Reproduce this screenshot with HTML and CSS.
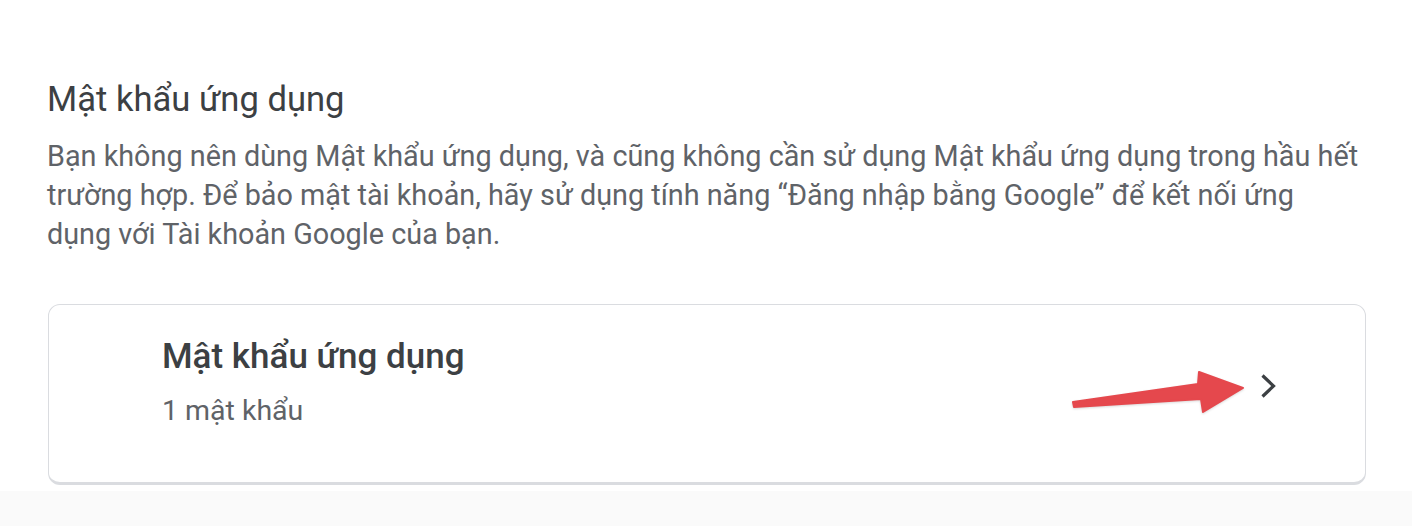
FILE: index.html
```html
<!doctype html>
<html lang="vi">

<head>
  <meta charset="utf-8">
  <meta name="viewport" content="width=device-width, initial-scale=1">
  <link rel="stylesheet" href="styles.css">
  <title>Mật khẩu ứng dụng</title>
</head>

<body>
  <div class="page">
    <div class="section">
      <h1 class="section-title">Mật khẩu ứng dụng</h1>
      <p class="section-desc">Bạn không nên dùng Mật khẩu ứng dụng, và cũng không cần sử dụng Mật khẩu ứng dụng trong hầu hết
        trường hợp. Để bảo mật tài khoản, hãy sử dụng tính năng “Đăng nhập bằng Google” để kết nối ứng dụng với Tài khoản Google của bạn.</p>

      <div class="card">
        <div class="card-text">
          <div class="card-title">Mật khẩu ứng dụng</div>
          <div class="card-sub">1 mật khẩu</div>
        </div>
        <div class="card-chevron">
          <svg viewBox="0 0 20 28" width="20" height="28">
            <path d="M3.5 3.5l11 10.5-11 10.5" fill="none" stroke="#3c4043" stroke-width="3.2" />
          </svg>
        </div>
        <svg class="annotation" viewBox="0 0 200 60" width="200" height="60">
          <polygon points="4,37 129,19 130,7 174,23 134,47 132,34 5,42" fill="#e5484d" stroke="#e5484d"
            stroke-width="2" stroke-linejoin="round" />
        </svg>
      </div>
    </div>
    <div class="footer-band"></div>
  </div>
</body>

</html>
```

FILE: styles.css
```css
body {
  font-family: Roboto, "Noto Sans", Arial, sans-serif;
  margin: 0;
  background-color: #fff;
  color: #3c4043;
}

.section {
  padding: 77px 46px 0 47px;
}

.section-title {
  margin: 0;
  font-size: 34.6px;
  line-height: 44px;
  font-weight: 400;
  color: #3c4043;
}

.section-desc {
  margin: 16px 5px 0 0;
  font-size: 28.8px;
  line-height: 39px;
  color: #5f6368;
}

.card {
  position: relative;
  display: flex;
  align-items: flex-start;
  margin: 50px 0 0 1px;
  height: 181px;
  box-sizing: border-box;
  border: 1px solid #dadce0;
  border-bottom-width: 3px;
  border-radius: 12px;
  background: #fff;
  padding: 30px 86px 0 113px;
}

.card-text {
  flex: 1;
}

.card-title {
  font-size: 35px;
  line-height: 44px;
  font-weight: 500;
  color: #3c4043;
}

.card-sub {
  margin-top: 14px;
  font-size: 28.5px;
  line-height: 36px;
  color: #5f6368;
}

.card-chevron {
  margin-top: 37px;
  display: flex;
}

.annotation {
  position: absolute;
  left: 1020px;
  top: 60px;
  filter: drop-shadow(0 1px 1px rgba(0, 0, 0, 0.15));
}

.footer-band {
  margin-top: 6px;
  height: 40px;
  background: #fafafa;
}
```
